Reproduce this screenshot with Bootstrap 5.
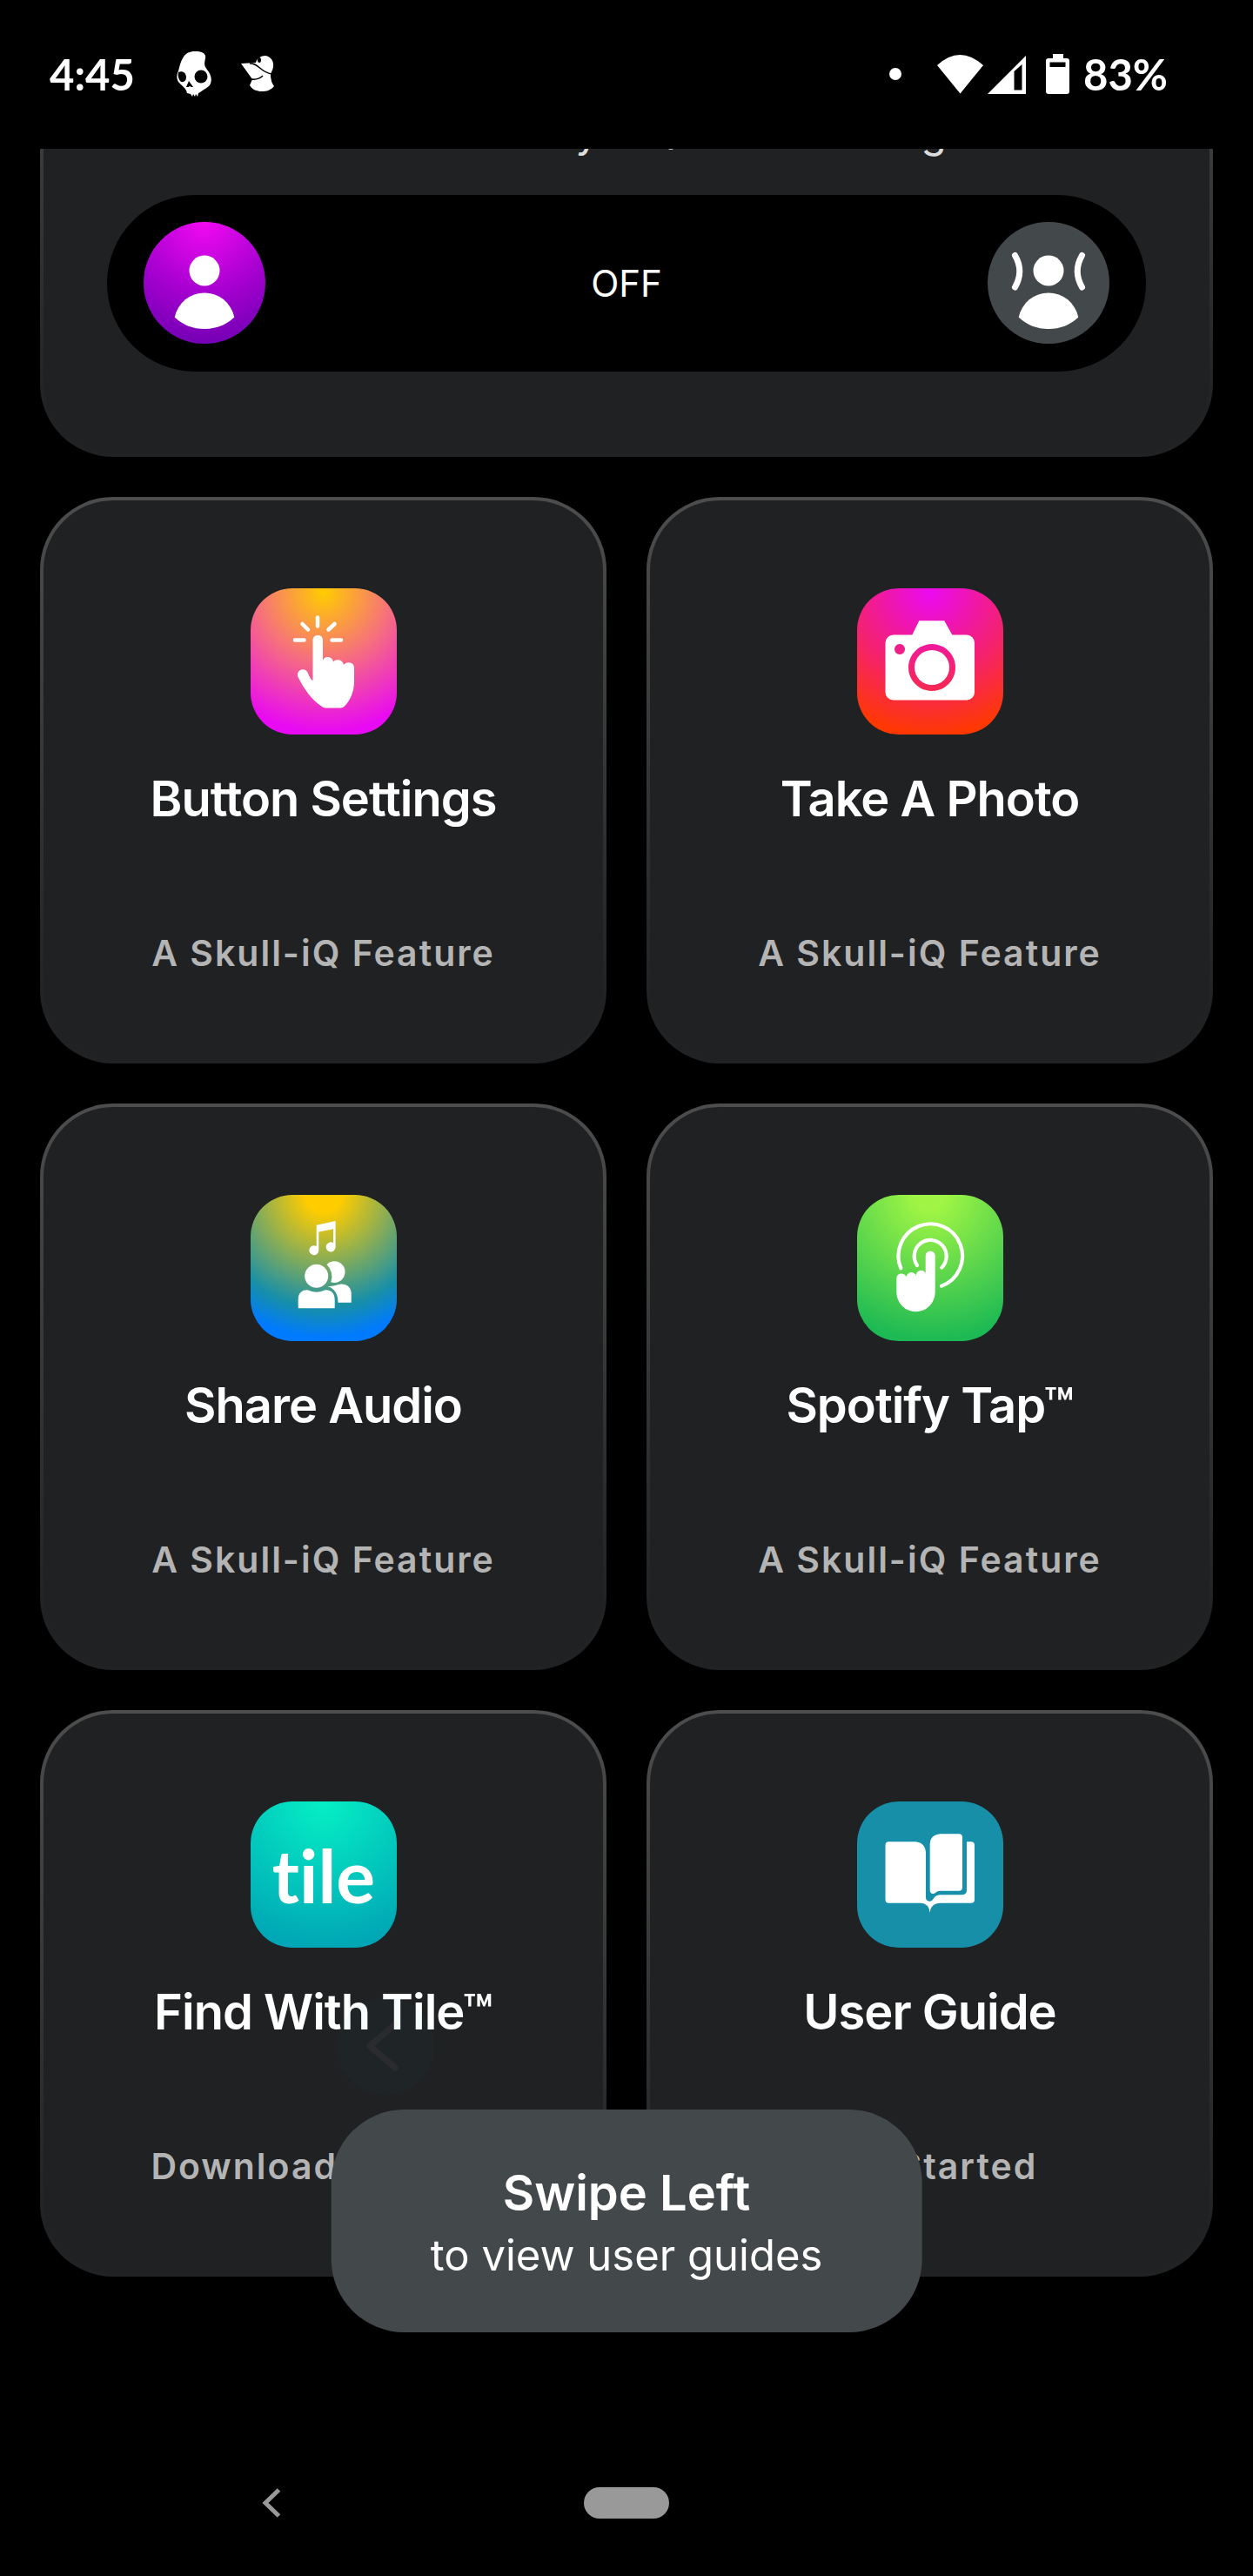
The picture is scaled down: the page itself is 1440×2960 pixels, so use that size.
<!DOCTYPE html>
<html lang="en">
<head>
<meta charset="utf-8">
<meta name="viewport" content="width=device-width, initial-scale=1">
<title>Skull-iQ</title>
<link href="https://cdn.jsdelivr.net/npm/bootstrap@5.3.0/dist/css/bootstrap.min.css" rel="stylesheet">
<style>
  body { background: #000; color: #fff; font-family: Inter, "Liberation Sans", sans-serif; }
  svg { display: block; }
  .status-bar { height: 171px; padding: 0 98px 0 57px; font: 700 49px/60px Lato, "Open Sans", sans-serif; }
  .status-inner { height: 170px; }
  .content-area { padding: 0 46px; }
  .panel {
    border: 4px solid transparent; border-radius: 84px;
    background: linear-gradient(#202123, #202123) padding-box, linear-gradient(#4d4d4d, #343536 50%, #212224 90%) border-box;
  }
  .panel-aware {
    border-top: 0; border-radius: 0 0 84px 84px; padding: 0 73px 94px;
    background: linear-gradient(#202123, #202123) padding-box, linear-gradient(#3b3b3c, #212224 85%) border-box;
  }
  .aware-hint { height: 82px; margin-top: -29px; font-size: 48px; line-height: 20px; letter-spacing: 1px; color: #dcdcdc; }
  .aware-switch { background: #000; padding: 31px 42px 32px; font-size: 42px; }
  .round-btn { width: 140px; height: 140px; padding: 0; border: 0; background: #43484a; }
  .round-btn.is-on { background: radial-gradient(circle 140px at 50% 0, #f20af2, #a600d0 58%, #7400b4); }
  .tiles { display: grid; grid-template-columns: 1fr 1fr; gap: 46px; margin-top: 46px; }
  .feature { padding: 101px 20px 98px; color: #fff; text-decoration: none; text-align: center; }
  .tile-icon { width: 168px; height: 168px; border-radius: 48px; margin: 0 auto 40px; }
  .feature-name { font-size: 56px; line-height: 68px; font-weight: 600; margin: 0 0 118px; letter-spacing: -1px; }
  .feature-note { font-size: 41px; line-height: 50px; font-weight: 600; margin: 0; letter-spacing: 2px; color: #b4b4b4; }
  .bg-press { background: radial-gradient(circle 168px at 50% 3%, #ffcc00, #f6727a 45%, #e80af2 95%); }
  .bg-photo { background: radial-gradient(circle 168px at 50% 3%, #ea0af0, #f4226f 55%, #ff3800 98%); }
  .bg-share { background: radial-gradient(circle 168px at 50% 0, #ffcc00 12%, #178fa8 77%, #007aff 98%); }
  .bg-tap { background: radial-gradient(circle 168px at 50% 0, #a0f544 10%, #1cb954); }
  .bg-find { background: radial-gradient(circle 172px at 50% 0, #05f0c5, #00a5b5); }
  .bg-guide { background: #178fa8; }
  .logo-word { font: 700 84px Lato, sans-serif; font-variant-ligatures: none; }
  .fade-hint { left: 387px; bottom: 209px; }
  .swipe-tip { bottom: -64px; padding: 60px 114px 52px; border-radius: 84px; background: #43484a; line-height: 72px; white-space: nowrap; }
  .tip-title { font-size: 56px; font-weight: 600; }
  .tip-text { font-size: 49px; }
  .nav-keys { display: grid; grid-template-columns: 1fr auto 1fr; height: 168px; }
  .key-btn { border: 0; padding: 0; background: none; }
  .back-slot { padding-right: 47px; }
  .home-key { width: 98px; height: 36px; background: #999; }
</style>
</head>
<body>
<div class="d-flex flex-column min-vh-100">

  <header class="status-bar">
    <div class="status-inner d-flex align-items-center justify-content-between">
      <div class="d-flex align-items-center">
        <span>4:45</span>
        <svg class="ms-5" width="40" height="52" viewBox="0 0 40 52" aria-hidden="true">
          <path fill="#fff" d="M21 0C29 0 34 2 33 8C32 14 31 16 35 21C39 26 41 31 39 37C37 42 30 44 27 47L25 48L24 52L22 49L21 52L19 49L18 52L16 49L12 48C11 42 6 40 2 35C0 32 0 28 1 25C3 21 3 15 7 8C10 2 15 0 21 0Z"/>
          <ellipse cx="28" cy="29" rx="7.500" ry="7.500" fill="#000"/>
          <path d="M2 24C7 22 11 25 11 30C11 34 7 37 4 34C2 31 1 28 2 24ZM14 34L19 41L11 41Z" fill="#000"/>
          <path d="M12 42L15 40L19 42Z" fill="#fff"/>
        </svg>
        <svg width="72" height="42" viewBox="-34 0 72 42" aria-hidden="true">
          <path fill="#fff" d="M0 9L17 8C18 3 23 0 28 0C34 1 38 6 37 13C36 18 34 19 34 24C35 29 35 31 38 35C34 40 29 41 24 41C18 41 13 39 10 34L13 27Z"/>
          <ellipse cx="21" cy="5" rx="2" ry="3" fill="#000"/>
          <path d="M10 9C20 8 22 19 35 21M12 27Q20 28 25 23" fill="none" stroke="#000" stroke-width="1.500"/>
        </svg>
      </div>
      <div class="d-flex align-items-center">
        <svg width="225" height="48" viewBox="0 0 225 48" aria-hidden="true">
          <g fill="#fff">
            <circle cx="25" cy="24" r="7"/>
            <path d="M73 14Q99 -10 126 14L99.500 46.500Z"/>
            <path fill-rule="evenodd" d="M131 47L175 3V47ZM161.500 21V42.500H170.500V13Z"/>
            <path fill-rule="evenodd" d="M206 1H218V6H222Q225 6 225 9V44Q225 47 222 47H201Q198 47 198 44V9Q198 6 201 6H206ZM202.500 10.500V16H220.500V10.500Z"/>
          </g>
        </svg>
        <span class="ms-3">83%</span>
      </div>
    </div>
  </header>

  <main class="content-area position-relative">
    <section class="panel panel-aware overflow-hidden">
      <p class="aware-hint text-center mb-0">Hear the clarity - Quieter settings</p>
      <div class="aware-switch rounded-pill d-flex align-items-center justify-content-between" role="group" aria-label="Listening mode">
        <button type="button" class="round-btn is-on rounded-circle" aria-label="Off">
          <svg width="140" height="140" viewBox="0 0 140 140" fill="#fff"><circle cx="70" cy="56" r="17.500"/><path d="M35.700 109.500A35 35 0 0 1 104.300 109.500Q90 123 70 123Q50 123 35.700 109.500Z"/></svg>
        </button>
        <span>OFF</span>
        <button type="button" class="round-btn rounded-circle" aria-label="Stay aware">
          <svg width="140" height="140" viewBox="0 0 140 140" fill="#fff"><circle cx="70" cy="56" r="17.500"/><path d="M35.700 109.500A35 35 0 0 1 104.300 109.500Q90 123 70 123Q50 123 35.700 109.500Z"/><path d="M31.500 38.500Q42 56.500 31.500 75M108.500 38.500Q98 56.500 108.500 75" fill="none" stroke="#fff" stroke-width="7" stroke-linecap="round"/></svg>
        </button>
      </div>
    </section>

    <div class="tiles">
      <a href="#" class="panel feature">
        <div class="tile-icon bg-press">
          <svg width="168" height="168" viewBox="0 0 168 168" aria-hidden="true">
            <path d="M77 33.500V43.500M51 59.500H61.500M93.500 59.500H104M59.500 41L66 47.500M96.500 41L89.500 47.500" stroke="#fff" stroke-width="4.500" stroke-linecap="round"/>
            <path fill="#fff" d="M71.500 106V59a5.800 5.800 0 0 1 11.500 0V83.500C84 77.500 93.500 77.500 95 84.500C98 80.500 106 81.500 107 88C109 84 118.500 83.500 119 91V107C119 120 114 129 108 135.500Q106 137.500 103.500 137.500H87Q84.500 137.500 82 136C70 128 61 115 54.500 102C51.500 94.500 61.500 89.500 65.500 96.500Q69 105.500 71.500 106Z"/>
          </svg>
        </div>
        <h2 class="feature-name">Button Settings</h2>
        <p class="feature-note">A Skull-iQ Feature</p>
      </a>

      <a href="#" class="panel feature">
        <div class="tile-icon bg-photo">
          <svg width="168" height="168" viewBox="0 0 168 168" aria-hidden="true">
            <path fill="#fff" fill-rule="evenodd" d="M63.300 53.500L71.300 37.200H100.300L109.300 53.500H126a9 9 0 0 1 9 9V119.500a9 9 0 0 1 -9 9H41.500a9 9 0 0 1 -9 -9V62.500a9 9 0 0 1 9 -9ZM86 64a27 27 0 1 0 .01 0ZM49 64a6 6 0 1 0 .01 0Z"/>
            <circle cx="86" cy="91" r="20" fill="#fff"/>
          </svg>
        </div>
        <h2 class="feature-name">Take A Photo</h2>
        <p class="feature-note">A Skull-iQ Feature</p>
      </a>

      <a href="#" class="panel feature">
        <div class="tile-icon bg-share">
          <svg width="168" height="168" viewBox="0 0 168 168" aria-hidden="true" fill="#fff">
            <path d="M75.700 34.700L97.600 30V60A5.500 5.500 0 1 1 95 55.200V39.200L78.300 42.500V63.700A5.500 5.500 0 1 1 75.700 59Z"/>
            <circle cx="75.700" cy="93.300" r="13.500"/>
            <path d="M87.500 80A12.300 12.300 0 1 1 92.300 100.200A19 19 0 0 0 87.500 80Z"/>
            <path d="M54.700 130.300V120C54.700 112 60 109 65.500 109.300Q75.700 114 86 109.300C92 109 96.700 113 96.700 120V130.300Z"/>
            <path d="M88.500 105Q95 105.500 100 103.300C108 100.500 115.700 105 115.700 113V123.700H100.500C100.500 113 96 107.500 88.500 105Z"/>
          </svg>
        </div>
        <h2 class="feature-name">Share Audio</h2>
        <p class="feature-note">A Skull-iQ Feature</p>
      </a>

      <a href="#" class="panel feature">
        <div class="tile-icon bg-tap">
          <svg width="168" height="168" viewBox="0 0 168 168" aria-hidden="true">
            <path d="M50.300 84.300A36.800 36.800 0 1 1 97 104.700M69 81A18.500 18.500 0 1 1 97.300 83.500" fill="none" stroke="#fff" stroke-width="4.200" stroke-linecap="round"/>
            <path fill="#fff" d="M78.700 90V70a5.500 5.500 0 0 1 11 0V112a22.200 22.200 0 0 1 -44.400 0V96C45.300 90 53.500 88.500 56.500 94C58 87.500 66 87.500 67.500 92.500C68.500 86 76.500 84.500 78.700 90Z"/>
          </svg>
        </div>
        <h2 class="feature-name">Spotify Tap™</h2>
        <p class="feature-note">A Skull-iQ Feature</p>
      </a>

      <a href="#" class="panel feature">
        <div class="tile-icon bg-find">
          <svg width="168" height="168" viewBox="0 0 168 168" aria-hidden="true"><text class="logo-word" x="84" y="117" text-anchor="middle" fill="#fff">tile</text></svg>
        </div>
        <h2 class="feature-name">Find With Tile™</h2>
        <p class="feature-note">Download the App</p>
      </a>

      <a href="#" class="panel feature">
        <div class="tile-icon bg-guide">
          <svg width="168" height="168" viewBox="0 0 168 168" aria-hidden="true" fill="#fff">
            <path d="M36.500 46.300H67Q79 47.500 79 60V111Q80 115 84 114.700Q86.500 114 88 111.500Q90.500 107.300 96 107.300H121Q126 107 126 102V46.300H131Q135 46.300 135 50.300V112.700Q135 116.700 131 116.700H96Q84.500 117 83.700 127.700Q82.500 117 73 116.700H36.500Q32.500 116.700 32.500 112.700V50.300Q32.500 46.300 36.500 46.300Z"/>
            <path d="M95.500 37.300H117Q121 37.300 121 41.300V98.700Q121 102.700 117 102.700H95.500C91 102.700 90 106 87.500 106Q83.700 106 83.700 102V49Q84 38.500 95.500 37.300Z"/>
          </svg>
        </div>
        <h2 class="feature-name">User Guide</h2>
        <p class="feature-note">Get Started</p>
      </a>
    </div>

    <svg class="fade-hint position-absolute" width="112" height="112" viewBox="0 0 112 112" aria-hidden="true">
      <circle cx="56" cy="56" r="56" fill="#178f98" fill-opacity=".04"/>
      <path d="M67 31L38 56L67 81" fill="none" stroke="#ff9c90" stroke-opacity=".05" stroke-width="7" stroke-linecap="round" stroke-linejoin="round"/>
    </svg>
    <div class="swipe-tip position-absolute start-50 translate-middle-x text-center" role="status">
      <div class="tip-title">Swipe Left</div>
      <div class="tip-text">to view user guides</div>
    </div>
  </main>

  <nav class="nav-keys mt-auto align-items-center" aria-label="System">
    <div class="back-slot d-flex justify-content-center">
      <button type="button" class="key-btn" aria-label="Back">
        <svg width="22" height="36" viewBox="0 0 22 36"><path d="M19.500 3L4 18L19.500 33" fill="none" stroke="#999" stroke-width="5"/></svg>
      </button>
    </div>
    <button type="button" class="key-btn home-key rounded-pill" aria-label="Home"></button>
  </nav>
</div>
<script src="https://cdn.jsdelivr.net/npm/bootstrap@5.3.0/dist/js/bootstrap.bundle.min.js"></script>
</body>
</html>
